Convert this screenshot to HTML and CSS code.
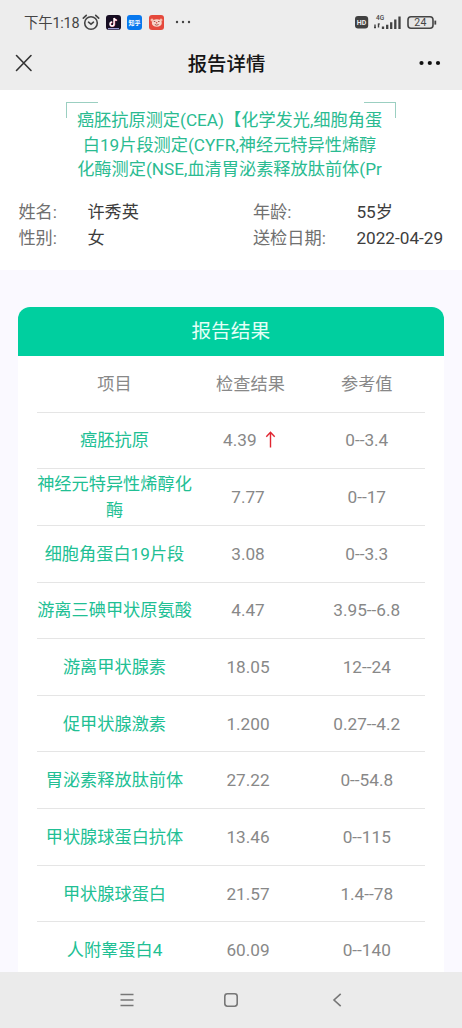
FILE: index.html
```html
<!DOCTYPE html>
<html lang="zh-CN">
<head>
<meta charset="utf-8">
<title>报告详情</title>
<link rel="stylesheet" href="styles.css">
</head>
<body>
<div class="screen">
  <header class="top">
    <div class="status">
      <span class="clock">下午1:18</span>
      <svg class="alarm" width="18" height="17" viewBox="0 0 18 17" fill="none" stroke="#444" stroke-width="1.6" stroke-linecap="round"><circle cx="9" cy="9" r="6.3"/><path d="M1.3 4.2 4.3 1.3M16.7 4.2 13.7 1.3M6.5 8.2 9 10.2 11.5 8.2"/></svg>
      <svg class="app" width="15" height="15" viewBox="0 0 15 15"><rect width="15" height="15" rx="3" fill="#170d22"/><path d="M2 13.7h11" stroke="#a6a2dd" stroke-width="1.3"/><path d="M8.5 3v6.2a2 2 0 1 1-2-2M8.5 3.2q.5 2 2.7 2.3" fill="none" stroke="#f45b78" stroke-width="1.5"/><path d="M8 3v6a2 2 0 1 1-2-2M8 3q.5 2 2.7 2.3" fill="none" stroke="#fff" stroke-width="1.4"/></svg>
      <svg class="app" width="15" height="15" viewBox="0 0 15 15"><rect width="15" height="15" rx="3" fill="#0878ee"/><text class="zhihu" x="7.5" y="9.8" text-anchor="middle">知乎</text></svg>
      <svg class="app" width="15" height="15" viewBox="0 0 15 15"><rect width="15" height="15" rx="3" fill="#e5493c"/><circle cx="3" cy="5" r="1.5" fill="#f7b9a8"/><circle cx="12" cy="5" r="1.5" fill="#f7b9a8"/><ellipse cx="7.8" cy="8" rx="5" ry="3.8" fill="#f7d5c9"/><path d="M4.8 6.5h1.5M9 6.5h1.5M5.8 9.5q1.9 1.3 3.8 0" fill="none" stroke="#9b4a43" stroke-width=".9"/><circle cx="7.6" cy="7.8" r=".8" fill="#d64a42"/></svg>
      <svg class="more-small" width="16" height="4" viewBox="0 0 16 4" fill="#444"><circle cx="2" cy="2" r="1.2"/><circle cx="8" cy="2" r="1.2"/><circle cx="14" cy="2" r="1.2"/></svg>
      <svg class="signals" width="84" height="18" viewBox="0 0 84 18"><rect x="1" y="3" width="13.2" height="12.4" rx="3" fill="#414141"/><text class="hd" x="7.6" y="11.8" text-anchor="middle">HD</text><text class="net" x="22" y="6.8">4G</text><path d="M21 14.8v-3.2M20 14.5h2M24.5 14.5v-4M24.3 11h1.4" stroke="#414141" stroke-width="1.4" fill="none"/><path d="M29 16v-2.5M33.2 16v-4.3M37.2 16V9.3M41.3 16V6.5M45.5 16V3.5" stroke="#414141" stroke-width="2.3"/><rect x="54" y="3.8" width="25" height="11.4" rx="3" fill="#e6e6e6" stroke="#444" stroke-width="1.6"/><path d="M81.3 7.6v4" stroke="#444" stroke-width="1.8"/><text class="charge" x="66.5" y="13.3" text-anchor="middle">24</text></svg>
    </div>
    <div class="nav">
      <svg width="18" height="18" viewBox="0 0 18 18" stroke="#333" stroke-width="1.6" stroke-linecap="round"><path d="M1.5 1.5l14.5 15M16 1.5l-14.5 15"/></svg>
      <h1>报告详情</h1>
      <svg width="22" height="6" viewBox="0 0 22 6" fill="#111"><circle cx="2.5" cy="3" r="2.1"/><circle cx="10.8" cy="3" r="2.1"/><circle cx="19" cy="3" r="2.1"/></svg>
    </div>
  </header>
  <main class="page">
    <section class="summary">
      <div class="report-name">
        <div>癌胚抗原测定(CEA)【化学发光,细胞角蛋</div>
        <div>白19片段测定(CYFR,神经元特异性烯醇</div>
        <div>化酶测定(NSE,血清胃泌素释放肽前体(Pr</div>
      </div>
      <dl class="patient">
        <dt>姓名:</dt><dd>许秀英</dd><dt>年龄:</dt><dd>55岁</dd>
        <dt>性别:</dt><dd>女</dd><dt>送检日期:</dt><dd>2022-04-29</dd>
      </dl>
    </section>
    <section class="results">
      <h2>报告结果</h2>
      <div class="rows">
        <div class="row"><span>项目</span><span>检查结果</span><span>参考值</span></div>
        <div class="row"><span class="item">癌胚抗原</span><span class="value raised">4.39 <svg class="up" width="11" height="17" viewBox="0 0 11 17" fill="none" stroke="#e02530" stroke-width="1.4"><path d="M5.5 16.5V1.5M1.3 5.7 5.5 1.3 9.7 5.7"/></svg></span><span>0--3.4</span></div>
        <div class="row"><span class="item">神经元特异性烯醇化酶</span><span class="value">7.77</span><span>0--17</span></div>
        <div class="row"><span class="item">细胞角蛋白19片段</span><span class="value">3.08</span><span>0--3.3</span></div>
        <div class="row"><span class="item">游离三碘甲状原氨酸</span><span class="value">4.47</span><span>3.95--6.8</span></div>
        <div class="row"><span class="item">游离甲状腺素</span><span class="value">18.05</span><span>12--24</span></div>
        <div class="row"><span class="item">促甲状腺激素</span><span class="value">1.200</span><span>0.27--4.2</span></div>
        <div class="row"><span class="item">胃泌素释放肽前体</span><span class="value">27.22</span><span>0--54.8</span></div>
        <div class="row"><span class="item">甲状腺球蛋白抗体</span><span class="value">13.46</span><span>0--115</span></div>
        <div class="row"><span class="item">甲状腺球蛋白</span><span class="value">21.57</span><span>1.4--78</span></div>
        <div class="row"><span class="item">人附睾蛋白4</span><span class="value">60.09</span><span>0--140</span></div>
      </div>
    </section>
  </main>
  <footer class="keys">
    <svg width="14" height="14" viewBox="0 0 14 14" stroke="#777" stroke-width="1.5"><path d="M.5 1.5h13M.5 7h13M.5 12.5h13"/></svg>
    <svg width="16" height="16" viewBox="0 0 16 16" fill="none" stroke="#777" stroke-width="1.6"><rect x="1.8" y="1.8" width="12.4" height="12.4" rx="2.6"/></svg>
    <svg width="10" height="14" viewBox="0 0 10 14" fill="none" stroke="#777" stroke-width="1.6"><path d="M8.7.8 2 7l6.7 6.2"/></svg>
  </footer>
</div>
</body>
</html>
```

FILE: styles.css
```css
* { box-sizing: border-box; }
body {
  margin: 0;
  font-family: Roboto, "Noto Sans CJK SC", sans-serif;
  font-size: 17.2px;
  color: #888;
}
svg { display: block; flex: none; }
.screen {
  width: 462px;
  height: 1028px;
  display: flex;
  flex-direction: column;
  overflow: hidden;
  background: #faf9ff;
}
.top { height: 90px; flex: none; background: #ededed; }
.status {
  height: 44px;
  padding: 0 24px 0 24px;
  display: flex;
  align-items: center;
}
.clock {
  width: 55px;
  padding-bottom: 1px;
  font-size: 14.4px;
  color: #444;
  white-space: nowrap;
  letter-spacing: -0.2px;
}
.alarm { margin: 0 6px 0 3px; }
.app { margin-right: 6.3px; }
.more-small { margin-left: 5px; }
.signals { margin-left: auto; }
.zhihu { font: 700 6px "Noto Sans CJK SC", sans-serif; fill: #fff; }
.hd { font: 700 7px Roboto, sans-serif; fill: #eee; }
.net { font: 500 6.5px Roboto, sans-serif; fill: #444; }
.charge { font: 400 10.5px Roboto, sans-serif; fill: #444; letter-spacing: .4px; }
.nav {
  height: 38px;
  padding: 0 21px 0 15px;
  display: grid;
  grid-template-columns: 18px 1fr 22px;
  align-items: center;
}
.nav h1 {
  margin: 0;
  padding: 0 0 2px 1px;
  text-align: center;
  font-size: 19.4px;
  font-weight: 500;
  color: #151515;
}
.page { flex: 1; min-height: 0; overflow: hidden; }
.summary { height: 180px; padding-top: 12px; background: #fff; }
.report-name {
  width: 330px;
  height: 87px;
  margin: 0 auto 0 66px;
  padding: 6px 3px 0 0;
  text-align: center;
  white-space: nowrap;
  line-height: 24.6px;
  color: #2abb91;
  background:
    linear-gradient(#9bcfc1, #9bcfc1) 0 0 / 32px 1px,
    linear-gradient(#9bcfc1, #9bcfc1) 0 0 / 1px 16px,
    linear-gradient(#9bcfc1, #9bcfc1) 100% 0 / 32px 1px,
    linear-gradient(#9bcfc1, #9bcfc1) 100% 0 / 1px 16px;
  background-repeat: no-repeat;
}
.patient {
  margin: 11.4px 0 0 18.4px;
  display: grid;
  grid-template-columns: 69px 165.5px 103.5px auto;
  line-height: 25.6px;
  white-space: nowrap;
}
.patient dt { color: #707070; }
.patient dd { margin: 0; color: #3d3d3d; }
.results {
  margin: 37px 18.5px 0 18px;
  background: #fff;
  border-radius: 12px 12px 0 0;
  overflow: hidden;
}
.results h2 {
  margin: 0;
  height: 49px;
  line-height: 49px;
  text-align: center;
  font-size: 19.7px;
  font-weight: 400;
  color: #e2fff7;
  background: #00cf9f;
}
.rows { padding: 0 18.5px; }
.row {
  height: 56.65px;
  padding-top: 1.6px;
  display: grid;
  grid-template-columns: 156px 116px 116.5px;
  align-items: center;
  text-align: center;
  line-height: 25.6px;
  border-bottom: 1px solid #e5e5e5;
}
.item { color: #21bf94; }
.value { padding-right: 5px; }
.raised { padding-right: 2px; }
.up { display: inline-block; vertical-align: -2px; margin-left: 4px; }
.keys {
  height: 56px;
  flex: none;
  padding: 0 120px;
  display: grid;
  grid-template-columns: 103px 1fr 10px;
  align-items: center;
  background: #ebebeb;
}
```
